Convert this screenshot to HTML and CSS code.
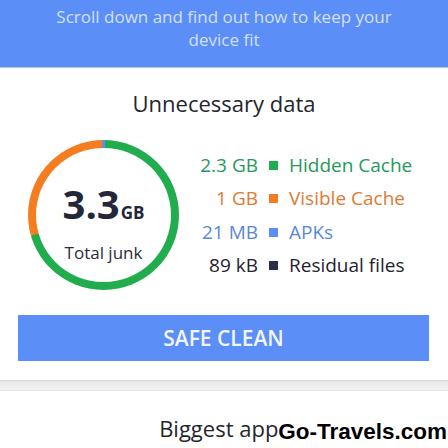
FILE: index.html
```html
<!DOCTYPE html>
<html lang="en">
<head>
  <meta charset="UTF-8">
  <meta name="viewport" content="width=device-width, initial-scale=1.0">
  <title>Unnecessary data</title>
  <link rel="stylesheet" href="styles.css">
</head>
<body>
  <div class="banner">
    <p>Scroll down and find out how to keep your device fit</p>
  </div>

  <h2 class="title">Unnecessary data</h2>

  <div class="summary">
    <div class="ring">
      <div class="ring-inner">
        <div class="total">3.3<span>GB</span></div>
        <div class="total-label">Total junk</div>
      </div>
    </div>

    <div class="legend">
      <span class="size green">2.3 GB</span><i class="dot bg-green"></i><span class="green">Hidden Cache</span>
      <span class="size orange">1 GB</span><i class="dot bg-orange"></i><span class="orange">Visible Cache</span>
      <span class="size blue">21 MB</span><i class="dot bg-blue"></i><span class="blue">APKs</span>
      <span class="size dark">89 kB</span><i class="dot bg-dark"></i><span class="dark">Residual files</span>
    </div>
  </div>

  <button class="clean">SAFE CLEAN</button>

  <div class="divider"></div>

  <div class="next">
    <h2 class="title next-title">Biggest apps</h2>
    <span class="watermark">Go-Travels.com</span>
  </div>
</body>
</html>
```

FILE: styles.css
```css
body {
  margin: 0;
  background-color: #ffffff;
  font-family: 'Open Sans', 'Noto Sans', sans-serif;
  color: #23273a;
  overflow: hidden;
}

.banner {
  background-color: #5b8ef7;
  border-bottom: 1px solid #b9c3d6;
  height: 68px;
  padding: 5px 50px 0;
  box-sizing: border-box;
}

.banner p {
  margin: 0;
  text-align: center;
  font-size: 17px;
  line-height: 23px;
  color: #d3e0fc;
}

.title {
  margin: 20px 0 0;
  text-align: center;
  font-size: 22px;
  font-weight: 400;
  line-height: 30px;
  color: #24262d;
}

.summary {
  display: flex;
  align-items: flex-start;
  margin-top: 22px;
  padding-left: 28px;
}

.ring {
  width: 151px;
  height: 150px;
  padding: 8px;
  box-sizing: border-box;
  border-radius: 50%;
  background: conic-gradient(#5b8ef7 0deg 1.5deg, #21ad4e 1.5deg 254deg, #f57d1f 254deg 358.5deg, #5b8ef7 358.5deg);
}

.ring-inner {
  height: 100%;
  border-radius: 50%;
  background-color: #ffffff;
  display: flex;
  flex-direction: column;
  align-items: center;
  padding-top: 36px;
  box-sizing: border-box;
}

.total {
  font-size: 40px;
  font-weight: 700;
  line-height: 40px;
  color: #23273a;
}

.total span {
  font-size: 17px;
  margin-left: 1px;
}

.total-label {
  margin-top: 9px;
  font-size: 17px;
  line-height: 22px;
  color: #2a2d38;
}

.legend {
  display: grid;
  grid-template-columns: 62px 9px auto;
  column-gap: 11px;
  align-items: center;
  margin-left: 17px;
  padding-top: 9px;
  font-size: 19px;
  line-height: 33.3px;
}

.size {
  text-align: right;
  white-space: nowrap;
}

.dot {
  width: 9px;
  height: 9px;
}

.green { color: #26995a; }
.orange { color: #dd7a33; }
.blue { color: #5a86d8; }
.dark { color: #1f2230; }

.bg-green { background-color: #1fae4f; }
.bg-orange { background-color: #f57c1f; }
.bg-blue { background-color: #5b8ef7; }
.bg-dark { background-color: #2a2f45; }

.clean {
  display: block;
  width: 411px;
  height: 46px;
  margin: 25px 0 0 18px;
  border: none;
  background-color: #5b8ef7;
  color: #f1f5fe;
  font-family: 'Open Sans', sans-serif;
  font-size: 21px;
  font-weight: 600;
  padding: 0;
}

.divider {
  margin-top: 19px;
  height: 9px;
  border-top: 1px solid #d6d6d6;
  border-bottom: 1px solid #e4e4e4;
  background: linear-gradient(#e8e8e8, #f3f3f3);
}

.next {
  position: relative;
}

.next-title {
  margin-top: 23px;
  line-height: 28px;
}

.watermark {
  position: absolute;
  top: 5px;
  right: 1px;
  font-family: 'Liberation Sans', Arial, sans-serif;
  font-weight: 700;
  font-size: 22.5px;
  line-height: 26px;
  color: #000000;
  background-color: #ffffff;
}
```
